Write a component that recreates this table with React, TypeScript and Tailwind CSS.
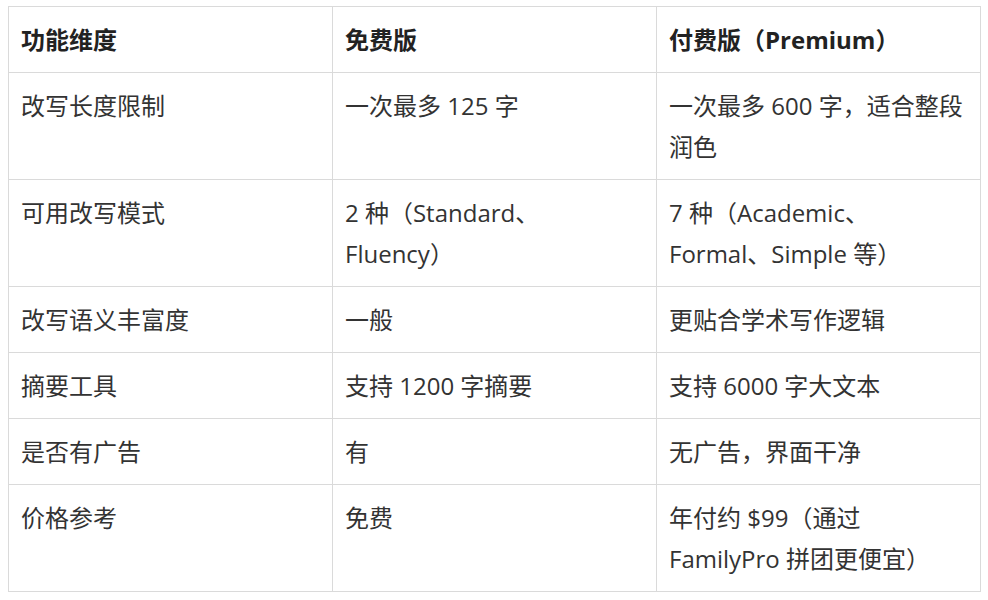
import { Fragment } from "react";

// "\n" marks where the reference breaks a cell's line
const rows: [string, string, string][] = [
  ["改写长度限制", "一次最多 125 字", "一次最多 600 字，适合整段润色"],
  ["可用改写模式", "2 种（Standard、\nFluency）", "7 种（Academic、Formal、Simple 等）"],
  ["改写语义丰富度", "一般", "更贴合学术写作逻辑"],
  ["摘要工具", "支持 1200 字摘要", "支持 6000 字大文本"],
  ["是否有广告", "有", "无广告，界面干净"],
  ["价格参考", "免费", "年付约 $99（通过 FamilyPro 拼团更便宜）"],
];

const cell = "border border-[#dadada] px-3 py-3 align-top text-left";

function Lines({ text }: { text: string }) {
  const parts = text.split("\n");
  return (
    <>
      {parts.map((p, i) => (
        <Fragment key={i}>
          {p}
          {i < parts.length - 1 && <br />}
        </Fragment>
      ))}
    </>
  );
}

export default function App() {
  return (
    <div
      className="min-h-[600px] w-[988px] bg-white pl-2 pt-[6px] text-[24px] leading-[41px] text-[#333]"
      style={{ fontFamily: '"Open Sans", "Noto Sans CJK SC", sans-serif' }}
    >
      <table className="w-[973px] table-fixed border-collapse">
        <thead>
          <tr>
            <th className={`${cell} font-bold text-[#222]`}>功能维度</th>
            <th className={`${cell} font-bold text-[#222]`}>免费版</th>
            <th className={`${cell} font-bold text-[#222]`}>付费版（Premium）</th>
          </tr>
        </thead>
        <tbody>
          {rows.map((r) => (
            <tr key={r[0]}>
              {r.map((c, i) => (
                <td key={i} className={`${cell} font-normal`}>
                  <Lines text={c} />
                </td>
              ))}
            </tr>
          ))}
        </tbody>
      </table>
    </div>
  );
}
